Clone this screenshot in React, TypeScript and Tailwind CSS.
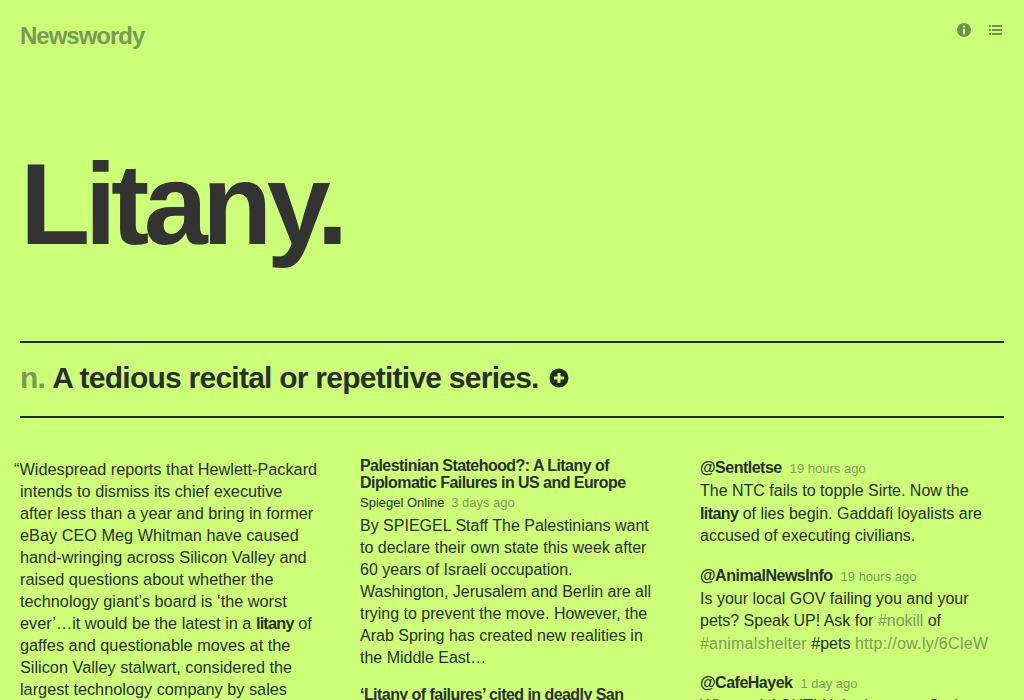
const sans = "font-['Liberation_Sans',Arial,sans-serif]";

function Tweet({ handle, time, children }: { handle: string; time: string; children?: React.ReactNode }) {
  return (
    <div className="mb-[18px]">
      <div className="flex items-baseline gap-[8px] h-[22px] leading-[20px]">
        <span className="font-bold text-[16px] tracking-[-0.5px]">{handle}</span>
        <span className="text-[13px] text-[#7c9c58]">{time}</span>
      </div>
      <p className="text-[16px] leading-[22.5px]">{children}</p>
    </div>
  );
}

export default function App() {
  return (
    <div className={`${sans} h-[700px] overflow-hidden bg-[#ccff77] text-[#2a2f2a] px-5`}>
      {/* header */}
      <header className="flex justify-between h-[139px] pt-[20px]">
        <div className="text-[24px] leading-[32px] font-bold text-[#789b52] tracking-[-1px]">Newswordy</div>
        <div className="flex gap-[18px] pt-[3px] pr-[2px] h-fit">
          <svg width="14" height="14" viewBox="0 0 14 14">
            <circle cx="7" cy="7" r="7" fill="#6f8f4a" />
            <rect x="6" y="2.5" width="2" height="2" fill="#ccff77" />
            <rect x="6" y="5.8" width="2" height="5.5" fill="#ccff77" />
          </svg>
          <svg width="13" height="14" viewBox="0 0 13 14" fill="#6f8f4a">
            <rect x="0" y="2" width="2" height="2" />
            <rect x="3" y="2" width="10" height="2" />
            <rect x="0" y="6" width="2" height="2" />
            <rect x="3" y="6" width="10" height="2" />
            <rect x="0" y="10" width="2" height="2" />
            <rect x="3" y="10" width="10" height="2" />
          </svg>
        </div>
      </header>

      <h1 className="h-[202px] text-[115px] leading-[130px] font-bold text-[#333333] tracking-[-5.6px]">Litany.</h1>

      {/* definition */}
      <div className="flex items-center h-[77px] pb-[5px] border-y-2 border-[#222c22] text-[30px] font-bold tracking-[-0.75px]">
        <span className="text-[#789b52]">n.</span>
        <span className="ml-[7px]">A tedious recital or repetitive series.</span>
        <svg className="ml-[10px] mt-[2px]" width="20" height="20" viewBox="0 0 20 20">
          <circle cx="10" cy="10" r="9.5" fill="#222c22" />
          <rect x="5" y="8.5" width="10" height="3" fill="#ccff77" />
          <rect x="8.5" y="5" width="3" height="10" fill="#ccff77" />
        </svg>
      </div>

      <div className="grid grid-cols-[300px_300px_300px] gap-x-[40px] pt-[39px]">
        {/* quote */}
        <p className="text-[16.3px] leading-[22px] w-[298.5px] pt-[1px]">
          <span className="-ml-[6px]">“</span>Widespread reports that Hewlett-Packard intends to dismiss its chief executive after less than a year and bring in former eBay CEO Meg Whitman have caused hand-wringing across Silicon Valley and raised questions about whether the technology giant’s board is ‘the worst ever’…it would be the latest in a <b className="tracking-[-0.8px]">litany</b> of gaffes and questionable moves at the Silicon Valley stalwart, considered the largest technology company by sales
        </p>

        {/* news */}
        <div>
          <h2 className="font-bold text-[16px] leading-[17px] tracking-[-0.55px]">Palestinian Statehood?: A Litany of Diplomatic Failures in US and Europe</h2>
          <div className="mt-[2px] text-[13px] leading-[20px]">
            Spiegel Online <span className="ml-[3px] text-[#7c9c58]">3 days ago</span>
          </div>
          <p className="text-[16px] leading-[22px] mt-[2px]">
            By SPIEGEL Staff The Palestinians want to declare their own state this week after 60 years of Israeli occupation. Washington, Jerusalem and Berlin are all trying to prevent the move. However, the Arab Spring has created new realities in the Middle East…
          </p>
          <h2 className="mt-[17px] font-bold text-[16px] leading-[17px] tracking-[-0.55px]">‘Litany of failures’ cited in deadly San</h2>
        </div>

        {/* tweets */}
        <div className="pt-[1px]">
          <Tweet handle="@Sentletse" time="19 hours ago">
            The NTC fails to topple Sirte. Now the <b className="tracking-[-0.6px]">litany</b> of lies begin. Gaddafi loyalists are accused of executing civilians.
          </Tweet>
          <Tweet handle="@AnimalNewsInfo" time="19 hours ago">
            Is your local GOV failing you and your pets? Speak UP! Ask for <span className="text-[#7c9c58]">#nokill</span> of <span className="text-[#7c9c58] tracking-[0.2px]">#animalshelter</span> #pets <span className="text-[#7c9c58] tracking-[0.3px]">http://ow.ly/6CleW</span>
          </Tweet>
          <Tweet handle="@CafeHayek" time="1 day ago">
            When a LAOUTI Unitarian says God
          </Tweet>
        </div>
      </div>
    </div>
  );
}
